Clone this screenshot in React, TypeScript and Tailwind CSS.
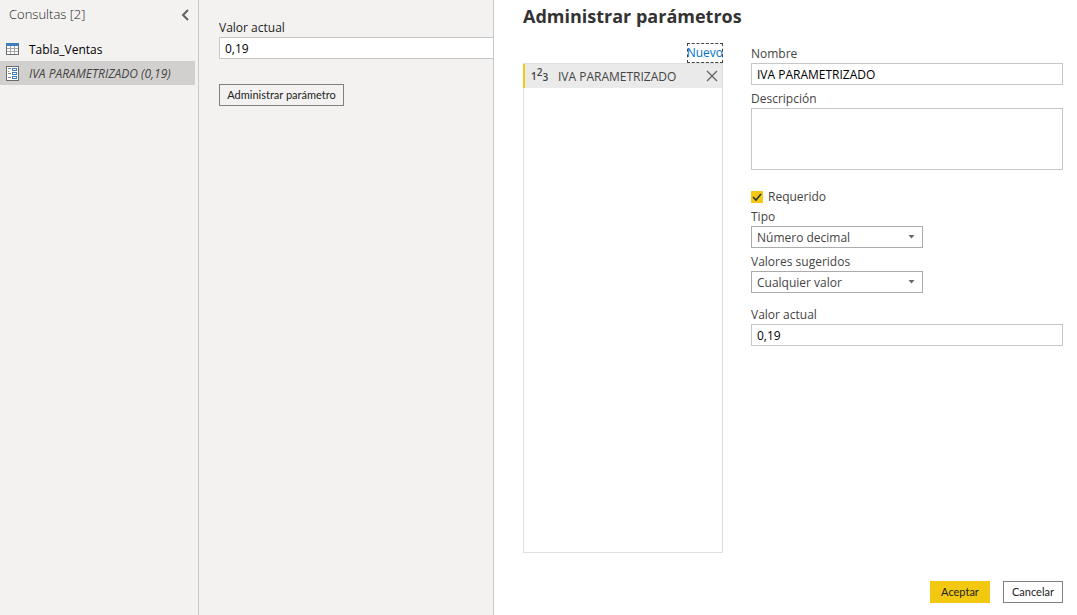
import React, { useState } from "react";

const inputClass =
  "block h-[22px] w-full border border-[#c6c6c6] bg-white px-[5px] text-[12px] text-black outline-none";
const labelClass = "block text-[12px] leading-[18px]";

const TableIcon = () => (
  <svg width="13" height="12" viewBox="0 0 13 12" shapeRendering="crispEdges">
    <rect x="0.5" y="0.5" width="12" height="11" fill="#fff" stroke="#6b6b6b" />
    <path d="M1 5.5h11M1 8.5h11M4.5 3v8M8.5 3v8" stroke="#a6a6a6" />
    <rect width="13" height="3" fill="#3f7fbf" />
  </svg>
);

const ParameterIcon = () => (
  <svg width="13" height="15" viewBox="0 0 13 15" shapeRendering="crispEdges">
    <rect x="0.5" y="0.5" width="12" height="14" fill="#fff" stroke="#6b6b6b" />
    <path d="M2 2.5h3M2 5.5h1M2 7.5h3M2 11.5h3" stroke="#8a8a8a" />
    <path
      d="M6.5 2.5h4v2h-4zM6.5 6.5h4v2h-4zM6.5 10.5h4v2h-4z"
      fill="#fff"
      stroke="#3f7fbf"
    />
  </svg>
);

const NumberIcon = () => (
  <span
    className="flex w-4 text-[10px] leading-4 font-semibold text-[#444444]"
    aria-hidden="true"
  >
    <span>1</span>
    <sup className="-top-1 text-[10px] leading-4">2</sup>
    <sub className="-bottom-px text-[10px] leading-4">3</sub>
  </span>
);

const QueriesPane = () => (
  <nav className="w-[199px] shrink-0 border-r border-[#c8c8c8]">
    <div className="flex h-[30px] items-center justify-between pr-2 pl-[9px]">
      <h2 className="text-[13px] font-light text-[#222222]">Consultas [2]</h2>
      <button type="button" aria-label="Contraer">
        <svg width="9" height="12" viewBox="0 0 9 12" fill="none">
          <path d="M7 1L2 6l5 5" stroke="#606060" strokeWidth="2" />
        </svg>
      </button>
    </div>
    <ul className="mt-[7px] mr-[3px] text-[12px]">
      <li className="flex h-6 items-center gap-[10px] pl-[6px] text-black">
        <TableIcon />
        <span className="pt-px">Tabla_Ventas</span>
      </li>
      <li className="flex h-6 items-center gap-[10px] bg-[#d2d0ce] pl-[6px] text-[#444444] italic">
        <ParameterIcon />
        <span className="pt-px">IVA PARAMETRIZADO (0,19)</span>
      </li>
    </ul>
  </nav>
);

const CurrentValuePane = () => {
  const [value, setValue] = useState("0,19");

  return (
    <section className="w-[295px] shrink-0 border-r border-[#c8c8c8] pt-[19px] pl-5">
      <label htmlFor="current" className={`${labelClass} text-[#222222]`}>
        Valor actual
      </label>
      <input
        id="current"
        className={`${inputClass} border-r-0`}
        value={value}
        onChange={(e) => setValue(e.target.value)}
      />
      <button
        type="button"
        className="mt-[25px] h-[22px] w-[125px] border border-[#808080] font-['Lato',sans-serif] text-[11px] text-[#222222]"
      >
        Administrar parámetro
      </button>
    </section>
  );
};

type SelectFieldProps = {
  id: string;
  label: string;
  options: string[];
};

const SelectField = ({ id, label, options }: SelectFieldProps) => (
  <div>
    <label htmlFor={id} className={labelClass}>
      {label}
    </label>
    <div className="relative w-[172px]">
      <select
        id={id}
        className="block h-[22px] w-full appearance-none border border-[#ababab] bg-white px-[5px] pt-px text-[12px] outline-none"
      >
        {options.map((option) => (
          <option key={option}>{option}</option>
        ))}
      </select>
      <svg
        className="pointer-events-none absolute top-[9px] right-2"
        width="7"
        height="4"
        viewBox="0 0 7 4"
      >
        <path d="M0.5 0h6l-3 3.5z" fill="#666666" />
      </svg>
    </div>
  </div>
);

const ParameterList = () => (
  <div className="flex w-[200px] shrink-0 flex-col">
    <a
      href="#nuevo"
      className="self-end text-[12px] leading-5 text-[#0072c9] outline-1 -outline-offset-1 outline-[#444444] outline-dashed"
    >
      Nuevo
    </a>
    <ul className="flex-1 border border-[#dfdfdf]">
      <li className="-ml-px flex h-6 items-center border-l-2 border-[#f2c811] bg-[#eaeaea] pr-1 pl-[6px] text-[12px]">
        <NumberIcon />
        <span className="ml-[11px] flex-1 pt-px whitespace-nowrap">IVA PARAMETRIZADO</span>
        <button type="button" aria-label="Eliminar">
          <svg width="12" height="12" viewBox="0 0 12 12" fill="none">
            <path d="M1 1l10 10M11 1L1 11" stroke="#666666" strokeWidth="1.4" />
          </svg>
        </button>
      </li>
    </ul>
  </div>
);

const ParameterForm = () => {
  const [name, setName] = useState("IVA PARAMETRIZADO");
  const [required, setRequired] = useState(true);
  const [value, setValue] = useState("0,19");

  return (
    <form className="flex min-w-0 flex-1 flex-col gap-[5px] pt-[2px]">
      <div>
        <label htmlFor="name" className={labelClass}>
          Nombre
        </label>
        <input
          id="name"
          className={inputClass}
          value={name}
          onChange={(e) => setName(e.target.value)}
        />
      </div>
      <div>
        <label htmlFor="description" className={labelClass}>
          Descripción
        </label>
        <textarea
          id="description"
          className="block h-[62px] w-full resize-none border border-[#c6c6c6] bg-white px-[5px] text-[12px] outline-none"
        />
      </div>
      <div className="mt-3">
        <label className="relative mb-px flex h-5 items-center gap-[5px] text-[12px]">
          <input
            type="checkbox"
            className="size-3 appearance-none border border-[#808080] checked:border-[#f2c811] checked:bg-[#f2c811]"
            checked={required}
            onChange={(e) => setRequired(e.target.checked)}
          />
          {required && (
            <svg
              className="pointer-events-none absolute top-1 left-0"
              width="12"
              height="12"
              viewBox="0 0 12 12"
              fill="none"
            >
              <path d="M2 6l3 3 5-6" stroke="#333333" strokeWidth="1.6" />
            </svg>
          )}
          Requerido
        </label>
        <SelectField
          id="type"
          label="Tipo"
          options={["Número decimal", "Texto", "Fecha"]}
        />
      </div>
      <SelectField
        id="suggested"
        label="Valores sugeridos"
        options={["Cualquier valor", "Lista de valores"]}
      />
      <div className="mt-2">
        <label htmlFor="value" className={labelClass}>
          Valor actual
        </label>
        <input
          id="value"
          className={inputClass}
          value={value}
          onChange={(e) => setValue(e.target.value)}
        />
      </div>
    </form>
  );
};

const ParametersDialog = () => (
  <main className="flex min-w-0 flex-1 flex-col bg-white pr-[14px] pb-3 pl-[29px] text-[#444444]">
    <h1 className="mb-[11px] text-[18px] leading-8 font-bold text-[#333333]">
      Administrar parámetros
    </h1>
    <div className="flex flex-1 gap-7">
      <ParameterList />
      <ParameterForm />
    </div>
    <div className="mt-7 flex justify-end gap-[13px] font-['Lato',sans-serif] text-[11px] text-[#222222]">
      <button type="button" className="h-[22px] w-[60px] bg-[#f2c811]">
        Aceptar
      </button>
      <button type="button" className="h-[22px] w-[60px] border border-[#808080] bg-white">
        Cancelar
      </button>
    </div>
  </main>
);

const App = () => {
  return (
    <div className="flex min-h-screen bg-[#f3f2f1] font-['Open_Sans',sans-serif]">
      <QueriesPane />
      <CurrentValuePane />
      <ParametersDialog />
    </div>
  );
};

export default App;
